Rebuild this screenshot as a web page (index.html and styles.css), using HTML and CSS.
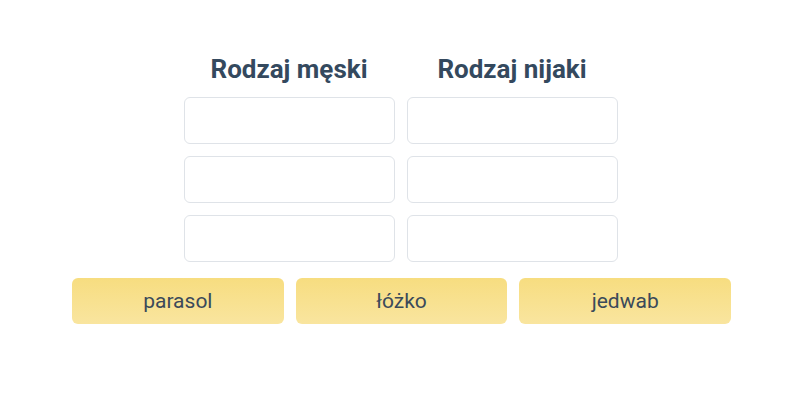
FILE: index.html
```html
<!DOCTYPE html>
<html lang="pl">
  <head>
    <meta charset="UTF-8" />
    <meta name="viewport" content="width=device-width, initial-scale=1.0" />
    <title>Rodzaje</title>
    <link rel="stylesheet" href="styles.css">
  </head>
  <body>
    <div class="exercise">
      <div class="columns">
        <div class="column">
          <h2 class="column-title">Rodzaj męski</h2>
          <div class="drop-box"></div>
          <div class="drop-box"></div>
          <div class="drop-box"></div>
        </div>
        <div class="column">
          <h2 class="column-title">Rodzaj nijaki</h2>
          <div class="drop-box"></div>
          <div class="drop-box"></div>
          <div class="drop-box"></div>
        </div>
      </div>
      <div class="words">
        <div class="word">parasol</div>
        <div class="word">łóżko</div>
        <div class="word">jedwab</div>
      </div>
    </div>
  </body>
</html>
```

FILE: styles.css
```css
body {
  margin: 0;
  background: #fff;
  font-family: Roboto, "Noto Sans", sans-serif;
  color: #34495e;
}

.exercise {
  display: flex;
  flex-direction: column;
  align-items: center;
  padding-top: 54px;
  gap: 16px;
}

.columns {
  display: flex;
  gap: 12px;
  padding-left: 1px;
}

.column {
  display: flex;
  flex-direction: column;
  gap: 12px;
  width: 211px;
}

.column-title {
  margin: 0 0 1px;
  font-size: 26px;
  line-height: 30px;
  font-weight: 700;
  text-align: center;
  color: #34495e;
}

.drop-box {
  height: 45px;
  border: 1px solid #dfe3e8;
  border-radius: 6px;
  background: #fff;
}

.words {
  display: flex;
  gap: 12px;
  width: 659px;
  margin-left: 3px;
}

.word {
  flex: 1;
  height: 46px;
  border-radius: 6px;
  background: linear-gradient(to bottom, #f7dd80, #f9e59f);
  display: flex;
  align-items: center;
  justify-content: center;
  font-size: 21px;
  color: #3b4a5a;
}
```
